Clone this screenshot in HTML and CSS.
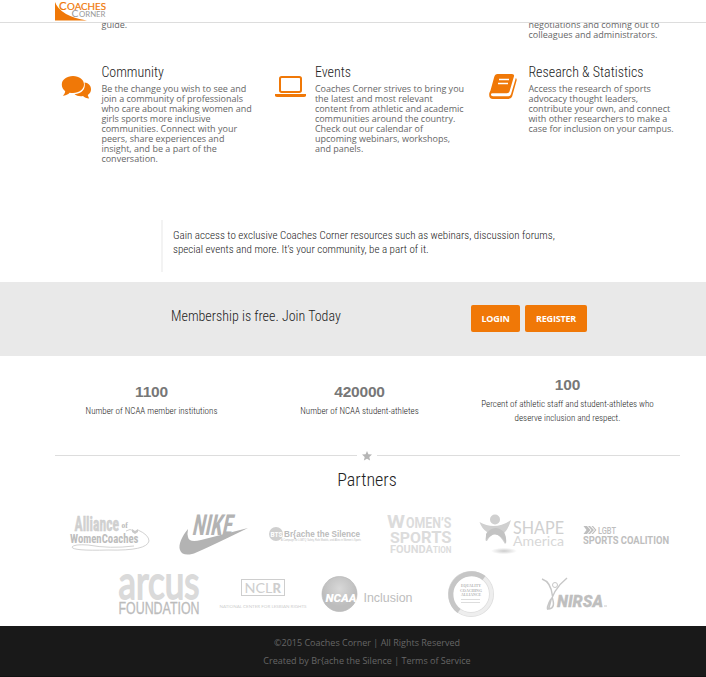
FILE: index.html
```html
<!DOCTYPE html>
<html lang="en">
<head>
<meta charset="utf-8">
<title>Coaches Corner</title>
<link rel="stylesheet" href="styles.css">
</head>
<body>
<header class="topbar">
  <svg class="brand" width="54" height="22" viewBox="54 0 54 22">
    <path d="M55 2Q60 16 87 20.500H55Z" fill="#f07807"/>
    <g font-family="Lato, sans-serif">
      <text x="59" y="9.500" font-size="11.500" fill="#f07807" stroke="#f07807" stroke-width=".2">C</text>
      <text x="67" y="9.500" font-size="9.800" fill="#f07807" stroke="#f07807" stroke-width=".2" textLength="39" lengthAdjust="spacingAndGlyphs">OACHES</text>
      <text x="71.500" y="17.300" font-size="10.300" fill="#999">C</text>
      <text x="79" y="17.300" font-size="8.300" fill="#999" textLength="26.500" lengthAdjust="spacingAndGlyphs">ORNER</text>
    </g>
  </svg>
</header>
<main>
  <section class="previous">
    <p>guide.</p>
    <p></p>
    <p class="tail">negotiations and coming out to<br>colleagues and administrators.</p>
  </section>
  <section class="features">
    <article class="feature">
      <svg class="icon" width="32" height="32" viewBox="60 70 32 32" fill="#f07807">
        <path d="M84.500 82.500C88 82.500 91 85.500 91 89.200C91 91.800 90 93.500 87.800 94.900C88 96.500 89 97.600 89.200 98.500C86.500 98.500 84.500 97.500 83 96.100C79.500 96.600 76.500 96 74.500 94.300C82 93.500 86 89 84.500 82.500Z"/>
        <path d="M73 76C79.300 76 84 79.600 84 84.500C84 89.300 79.300 93 73 93C71.800 93 70.700 92.900 69.700 92.700C68 94.400 65.700 95.500 62.800 95.700C64.200 94.400 65 92.900 65.200 91.200C63 89.600 61.800 87.200 61.800 84.500C61.800 79.600 66.700 76 73 76Z"/>
      </svg>
      <div class="copy">
        <h2>Community</h2>
        <p>Be the change you wish to see and<br>join a community of professionals<br>who care about making women and<br>girls sports more inclusive<br>communities. Connect with your<br>peers, share experiences and<br>insight, and be a part of the<br>conversation.</p>
      </div>
    </article>
    <article class="feature">
      <svg class="icon" width="32" height="32" viewBox="274 70 32 32">
        <rect x="280" y="77" width="21" height="15" rx="1.700" fill="none" stroke="#f07807" stroke-width="2"/>
        <path d="M275 94H306V95.500Q306 97 303.500 97H277.500Q275 97 275 95.500Z" fill="#f07807"/>
      </svg>
      <div class="copy">
        <h2>Events</h2>
        <p>Coaches Corner strives to bring you<br>the latest and most relevant<br>content from athletic and academic<br>communities around the country.<br>Check out our calendar of<br>upcoming webinars, workshops,<br>and panels.</p>
      </div>
    </article>
    <article class="feature">
      <svg class="icon" width="32" height="32" viewBox="487 70 32 32">
        <path d="M497.500 74H512Q514.500 74 514 76.300L509.500 91.500Q509 93.300 507 93.300H492.500Q491 93.300 490.900 94.600Q490.900 96.200 493 96.200H508.500Q510.300 96.200 511 94.300L515.800 78Q517 78.800 516.600 80.500L512.200 96.200Q511.300 99 508.500 99H493Q489 99 489.200 94.500Q489.300 92.500 490.500 90.500L494.200 77Q495 74 497.500 74Z" fill="#f07807"/>
        <path d="M499 79.500H509M498 83.500H508" stroke="#fff" stroke-width="1.500"/>
      </svg>
      <div class="copy">
        <h2>Research &amp; Statistics</h2>
        <p>Access the research of sports<br>advocacy thought leaders,<br>contribute your own, and connect<br>with other researchers to make a<br>case for inclusion on your campus.</p>
      </div>
    </article>
  </section>
  <blockquote class="pitch">Gain access to exclusive Coaches Corner resources such as webinars, discussion forums,<br>special events and more. It’s your community, be a part of it.</blockquote>
  <section class="join">
    <h2>Membership is free. Join Today</h2>
    <a class="button login">LOGIN</a>
    <a class="button register">REGISTER</a>
  </section>
  <section class="stats">
    <div class="stat"><strong>1100</strong><span>Number of NCAA member institutions</span></div>
    <div class="stat"><strong>420000</strong><span>Number of NCAA student-athletes</span></div>
    <div class="stat raised"><strong>100</strong><span>Percent of athletic staff and student-athletes who<br>deserve inclusion and respect.</span></div>
  </section>
  <div class="divider">
    <svg width="10" height="10" viewBox="0 0 10 10"><path d="M5 0L6.400 3.300L10 3.600L7.300 6L8.100 9.600L5 7.700L1.900 9.600L2.700 6L0 3.600L3.600 3.300Z" fill="#b5b5b5"/></svg>
  </div>
  <h1>Partners</h1>
  <section class="partners">
    <svg width="104" height="64" viewBox="55 500 104 64">
      <g class="narrow">
        <text x="74.500" y="530.500" font-size="20" textLength="44.500" lengthAdjust="spacingAndGlyphs" fill="#d2d2d2" stroke="#cacaca" stroke-width=".4">Alliance</text>
        <text x="70" y="542.500" font-size="12.500" textLength="68.500" lengthAdjust="spacingAndGlyphs" fill="#bdbdbd">WomenCoaches</text>
      </g>
      <text x="121.500" y="527.500" font-size="7.500" font-family="Liberation Serif, serif" font-weight="700" fill="#bbb">of</text>
      <path d="M126 531Q130 528 134 531M138 530Q149 535 149 541Q147 551 108 550Q72 551 72 547Q74 544 88 545Q110 549 134 546" fill="none" stroke="#d2d2d2"/>
      <path d="M132 529L135 531L138 529V532L135 534L132 532Z" fill="#c9c9c9"/>
    </svg>
    <svg width="104" height="64" viewBox="159 500 104 64" fill="#b3b3b3">
      <text x="0" y="0" class="narrow" transform="translate(191.500 535) skewX(-12)" font-size="29" textLength="40" lengthAdjust="spacingAndGlyphs">NIKE</text>
      <path d="M188 529C182 536 178 545 180 550Q182 556 192 554Q197 553 248 528L201 540Q189 543 188 537Q187 534 188 529Z"/>
    </svg>
    <svg width="104" height="64" viewBox="263 500 104 64" fill="#bbb">
      <circle cx="276" cy="534" r="7" fill="#cfcfcf"/>
      <text x="270.500" y="537" font-size="8" font-family="Roboto, sans-serif" font-weight="700" fill="#fff" textLength="12" lengthAdjust="spacingAndGlyphs">BTS</text>
      <g font-family="Liberation Sans, sans-serif">
        <text x="284" y="536.800" font-size="8.200" font-weight="700" textLength="76" lengthAdjust="spacingAndGlyphs">Br{ache the Silence</text>
        <text x="281" y="540.500" font-size="2.600" textLength="80" lengthAdjust="spacingAndGlyphs">A Campaign for LGBTQ Safety, Role Models, and Allies in Women’s Sports</text>
      </g>
    </svg>
    <svg width="104" height="64" viewBox="367 500 104 64" fill="#dcdcdc">
      <g font-family="Roboto, sans-serif" font-weight="700">
        <text x="387" y="528" font-size="18" textLength="18" lengthAdjust="spacingAndGlyphs">W</text>
        <text x="406" y="528" font-size="15" textLength="45.500" lengthAdjust="spacingAndGlyphs">OMEN’S</text>
        <text x="390" y="543" font-size="14.500" textLength="31" lengthAdjust="spacingAndGlyphs">SPO</text>
        <text x="421" y="543" font-size="17" textLength="30.500" lengthAdjust="spacingAndGlyphs">RTS</text>
        <text x="390" y="552.800" font-size="10.500" textLength="43" lengthAdjust="spacingAndGlyphs">FOUNDA</text>
        <text x="433" y="552.800" font-size="8.500" textLength="18.500" lengthAdjust="spacingAndGlyphs">TION</text>
      </g>
    </svg>
    <svg width="104" height="64" viewBox="471 500 104 64" fill="#d0d0d0">
      <defs><radialGradient id="shadow"><stop stop-color="#ccc"/><stop offset="1" stop-color="#fff"/></radialGradient></defs>
      <ellipse cx="504" cy="551" rx="13" ry="3.200" fill="url(#shadow)"/>
      <circle cx="495" cy="519.500" r="5"/>
      <path d="M479.500 522Q495 531 511 520Q508 530 504 533Q507 539 505 544Q500 535 495 533.500Q491 534 487 541Q484 542 487 532Q482 529 479.500 522Z"/>
      <path d="M486 534Q494 523 504 532Q507 538 506 544Q502 535 495 534.500Q491 534.500 486 540Z" fill="#c3c3c3"/>
      <g font-family="Lato, sans-serif">
        <text x="513" y="533.800" font-size="17.500" textLength="51" lengthAdjust="spacingAndGlyphs">SHAPE</text>
        <text x="513" y="546" font-size="12.500" textLength="51" lengthAdjust="spacingAndGlyphs" fill="#d8d8d8">America</text>
      </g>
    </svg>
    <svg width="104" height="64" viewBox="575 500 104 64" fill="#bebebe">
      <path d="M583.500 526H587L590.500 530L587 534H583.500L586.500 530ZM588 526H590L594 530L590 534H588L591.500 530ZM591.500 526H593L596.500 530L593 534H591.500L595 530Z"/>
      <text x="598" y="534" font-family="Roboto, sans-serif" font-weight="500" font-size="8.500" textLength="18" lengthAdjust="spacingAndGlyphs">LGBT</text>
      <text x="583" y="543.800" font-family="Roboto, sans-serif" font-weight="700" font-size="10.500" textLength="86" lengthAdjust="spacingAndGlyphs">SPORTS COALITION</text>
    </svg>
    <svg width="104" height="58" viewBox="107 564 104 58">
      <text x="118.500" y="596.500" font-family="Lato, sans-serif" font-size="46" textLength="81" lengthAdjust="spacingAndGlyphs" fill="#dadada" stroke="#dadada" stroke-width="1.800">arcus</text>
      <text x="118.500" y="611.500" font-family="Liberation Sans, sans-serif" font-size="16.500" textLength="81" lengthAdjust="spacingAndGlyphs" fill="#bcbcbc" stroke="#bcbcbc" stroke-width=".3">FOUNDATION</text>
    </svg>
    <svg width="104" height="58" viewBox="211 564 104 58" fill="#cecece">
      <rect x="241.500" y="577.500" width="43" height="16" fill="none" stroke="#cecece"/>
      <g font-family="Lato, sans-serif">
        <text x="244.500" y="590.500" font-size="13" textLength="28" lengthAdjust="spacingAndGlyphs">NCL</text>
        <text x="272.500" y="590.500" font-size="13" font-weight="900">R</text>
        <text x="219.500" y="605.500" font-size="3.700" textLength="87" lengthAdjust="spacingAndGlyphs">NATIONAL CENTER FOR LESBIAN RIGHTS</text>
      </g>
    </svg>
    <svg width="104" height="58" viewBox="315 564 104 58">
      <defs><radialGradient id="ball" cx="50%" cy="35%"><stop stop-color="#d8d8d8"/><stop offset="1" stop-color="#bdbdbd"/></radialGradient></defs>
      <circle cx="339.500" cy="592" r="17.500" fill="url(#ball)" stroke="#b8b8b8" stroke-width=".7"/>
      <text x="325.500" y="600" font-family="Roboto, sans-serif" font-style="italic" font-weight="900" font-size="11.500" fill="#fff" textLength="31" lengthAdjust="spacingAndGlyphs">NCAA</text>
      <text x="363.500" y="600" font-family="Liberation Sans, sans-serif" font-size="13" fill="#bdbdbd" textLength="49" lengthAdjust="spacingAndGlyphs">Inclusion</text>
    </svg>
    <svg width="104" height="58" viewBox="419 564 104 58">
      <circle cx="471" cy="592" r="20.500" fill="none" stroke="#ddd" stroke-width="5"/>
      <circle cx="471" cy="592" r="20.500" fill="none" stroke="#eee" stroke-width="3.500"/>
      <path d="M459 609A20.500 20.500 0 0 1 484 576" fill="none" stroke="#c6c6c6" stroke-width="5"/>
      <g font-family="Liberation Serif, serif" font-size="3.800" font-weight="700" fill="#b4b4b4">
        <text x="461" y="585" textLength="20" lengthAdjust="spacingAndGlyphs">EQUALITY</text>
        <text x="460" y="589.500" textLength="22" lengthAdjust="spacingAndGlyphs">COACHING</text>
        <text x="461" y="594" textLength="20" lengthAdjust="spacingAndGlyphs">ALLIANCE</text>
      </g>
      <path d="M461 597.500H480M461 600.500H480" stroke="#ddd"/>
    </svg>
    <svg width="104" height="58" viewBox="523 564 104 58" fill="none">
      <path d="M542 577Q551 580 552.500 594M567 576Q552 588 549 606Q547 609 547.500 605Q549 600 551 597M552 595Q556 606 549 607" stroke="#c7c7c7" stroke-width="1.500"/>
      <circle cx="555" cy="583" r="2.500" stroke="#c7c7c7"/>
      <text x="557" y="605" font-family="Roboto, sans-serif" font-weight="900" font-style="italic" font-size="16" textLength="46" lengthAdjust="spacingAndGlyphs" fill="#bfbfbf" stroke="#bfbfbf" stroke-width=".3">NIRSA</text>
      <path d="M604 604H607" stroke="#ccc"/>
    </svg>
  </section>
</main>
<footer>
  <p class="copyright">©2015 Coaches Corner | All Rights Reserved</p>
  <p class="credits">Created by Br{ache the Silence | Terms of Service</p>
</footer>
</body>
</html>
```
FILE: styles.css
```css
* { box-sizing: border-box; }
body {
  margin: 0;
  background: #fff;
  color: #666;
  font: 9px/10px "Open Sans", sans-serif;
  overflow: hidden;
}
h1, h2, p, blockquote { margin: 0; }
h1, h2, .pitch, .stat {
  font-family: "Roboto Condensed", Roboto, sans-serif;
  font-stretch: 75%;
  font-weight: 300;
  color: #222;
}
.narrow {
  font-family: "Roboto Condensed", Roboto, sans-serif;
  font-stretch: 75%;
  font-weight: 700;
}
.topbar {
  height: 23px;
  padding-left: 54px;
  border-bottom: 1px solid #ddd;
  background: #fff;
  position: relative;
  z-index: 1;
}
.brand { display: block; }
.previous {
  display: grid;
  grid-template-columns: 213.5px 213.5px 1fr;
  padding-left: 101.5px;
  height: 41px;
  margin-top: -3px;
}
.features {
  display: grid;
  grid-template-columns: 213.5px 213.5px 1fr;
  padding-left: 60px;
  height: 159px;
}
.feature { display: flex; gap: 9.4px; }
.icon { flex: none; margin-top: 9px; }
.copy { padding-top: 2px; white-space: nowrap; }
.copy h2 { font-size: 14px; line-height: 18px; margin-bottom: 3px; }
.features .copy h2 { font-weight: 350; }
.pitch {
  margin-left: 161px;
  height: 52px;
  padding: 9px 0 0 10px;
  border-left: 2px solid #f3f3f3;
  font-size: 11px;
  line-height: 14px;
  white-space: nowrap;
}
.join {
  display: flex;
  height: 74px;
  margin-top: 10px;
  padding: 23px 0 0 171px;
  background: #e9e9e9;
}
.join h2 { width: 300px; font-size: 14px; line-height: 22px; }
.button {
  height: 27px;
  border-radius: 2px;
  background: #f07807;
  color: #fff;
  font-weight: 700;
  letter-spacing: -.2px;
  line-height: 27px;
  text-align: center;
}
.login { width: 49px; margin-right: 5px; }
.register { width: 62px; }
.stats {
  display: grid;
  grid-template-columns: repeat(3, 208px);
  height: 94px;
  padding: 27px 0 0 47.5px;
  text-align: center;
}
.stat { white-space: nowrap; font-size: 9px; line-height: 14px; }
.stat strong {
  display: block;
  height: 21px;
  color: #777;
  font: 700 15.5px/17px "Liberation Sans", sans-serif;
  letter-spacing: -.2px;
}
.stat span { display: block; }
.raised { margin-top: -7px; }
.divider {
  display: flex;
  align-items: center;
  gap: 5px;
  height: 11px;
  margin: 0 26px 0 55px;
}
.divider::before, .divider::after { content: ""; flex: 1; height: 1px; background: #ddd; }
.divider::before { flex: 0 0 302px; }
h1 { height: 39px; padding: 7px 0 0; margin-left: 28px; text-align: center; font-size: 18px; line-height: 24px; }
.partners { display: flex; flex-wrap: wrap; justify-content: center; width: 624px; margin-left: 55px; height: 126px; }
footer { height: 51px; padding: 8px 0 0 28px; background: #191919; text-align: center; line-height: 18px; border-bottom: 1px solid #111; }
```
